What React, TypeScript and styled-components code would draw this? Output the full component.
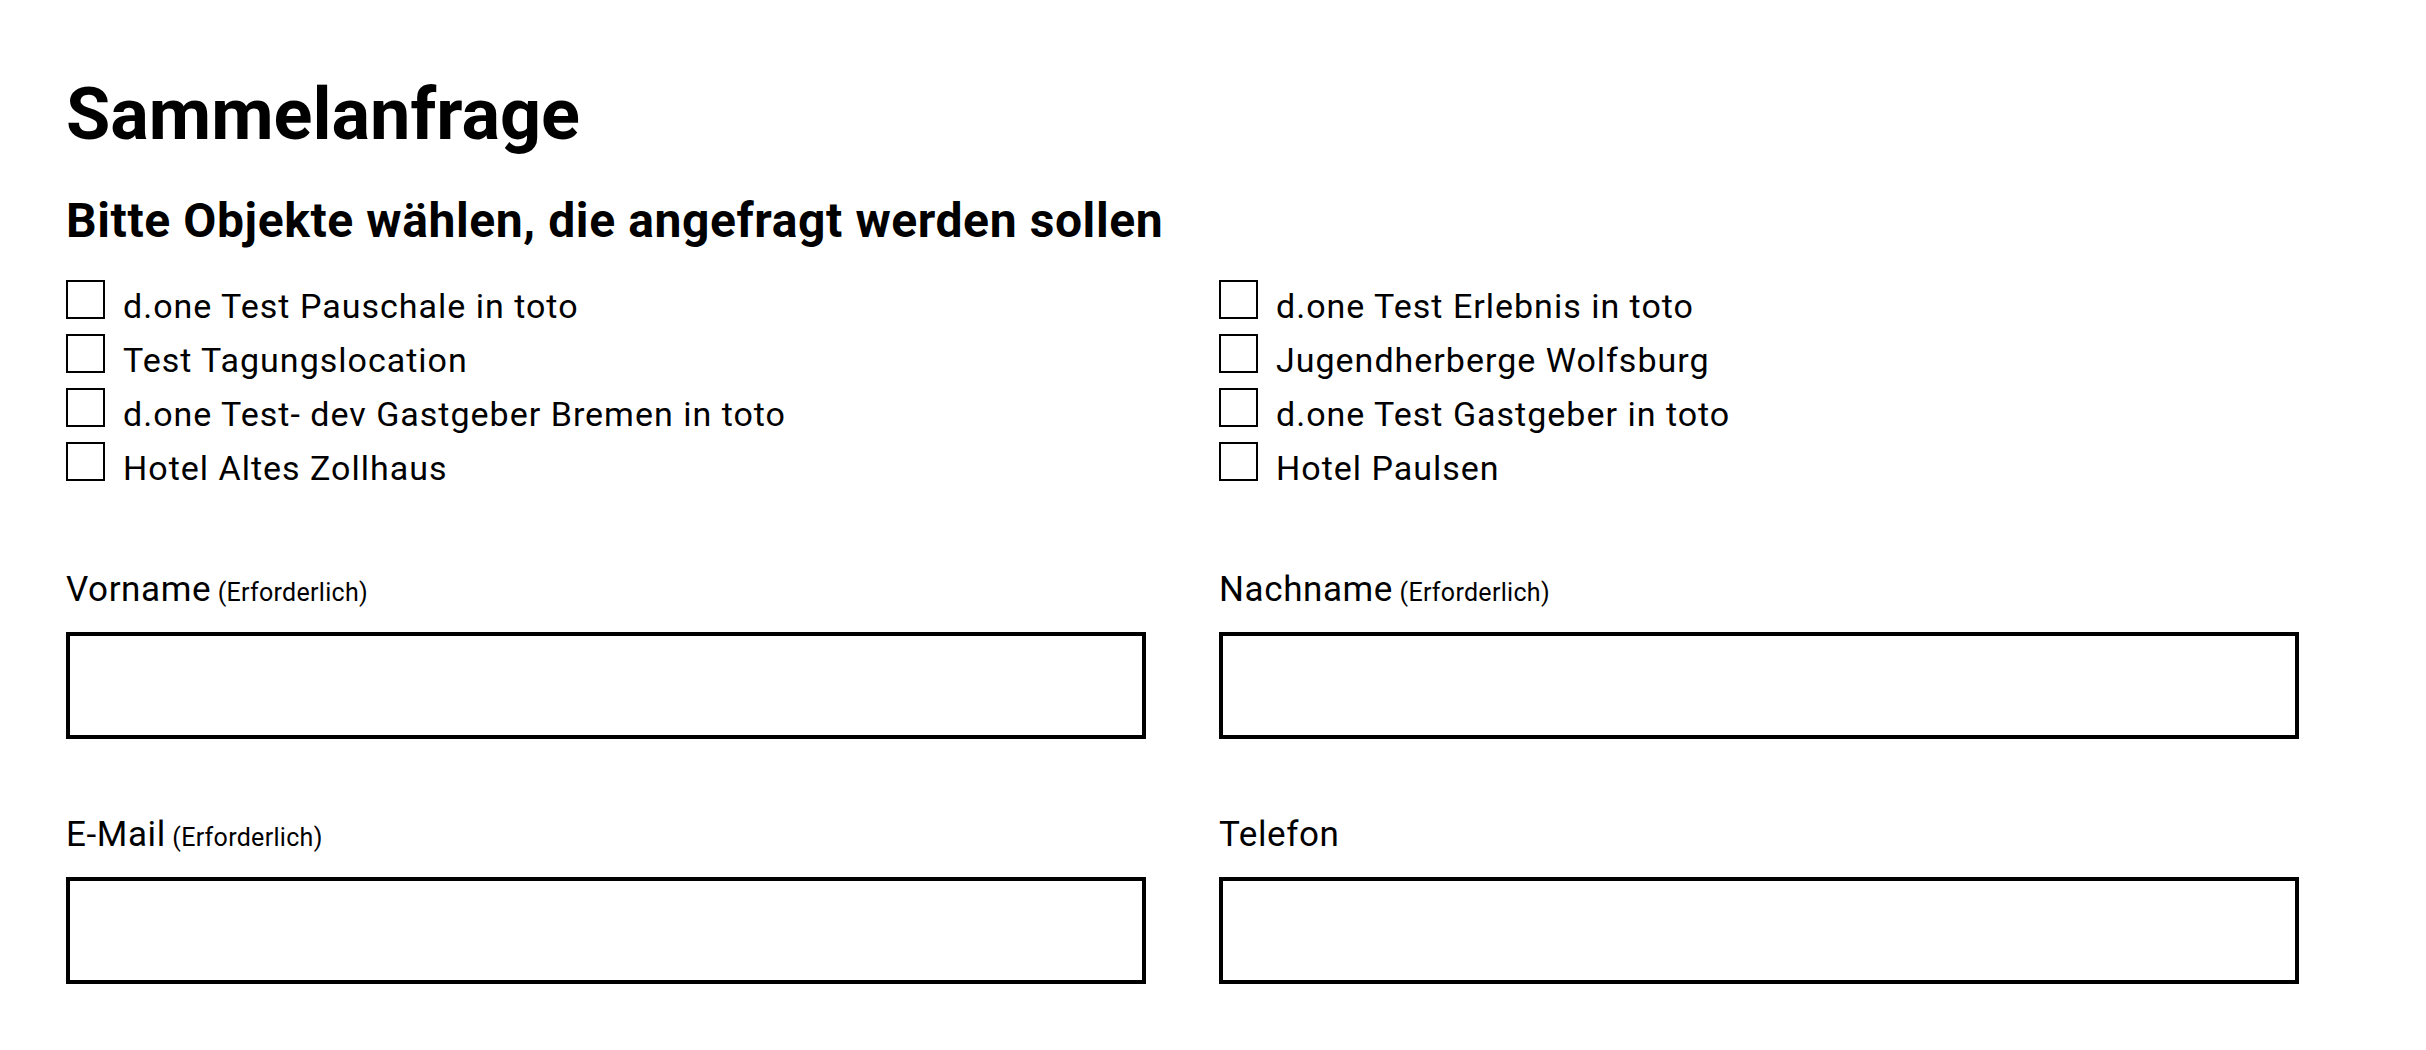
import styled, { createGlobalStyle } from "styled-components";

const GlobalStyle = createGlobalStyle`
  html, body {
    margin: 0;
    padding: 0;
    background: #fff;
  }
  body {
    font-family: Roboto, "Noto Sans", "Liberation Sans", sans-serif;
    color: #000;
  }
  * {
    box-sizing: border-box;
  }
`;

const objects = [
  "d.one Test Pauschale in toto",
  "d.one Test Erlebnis in toto",
  "Test Tagungslocation",
  "Jugendherberge Wolfsburg",
  "d.one Test- dev Gastgeber Bremen in toto",
  "d.one Test Gastgeber in toto",
  "Hotel Altes Zollhaus",
  "Hotel Paulsen",
];

const fields = [
  { label: "Vorname", required: true },
  { label: "Nachname", required: true },
  { label: "E-Mail", required: true },
  { label: "Telefon", required: false },
];

export default function App() {
  return (
    <Page>
      <GlobalStyle />
      <Title>Sammelanfrage</Title>
      <SubTitle>Bitte Objekte wählen, die angefragt werden sollen</SubTitle>
      <ObjectGrid>
        {objects.map((name) => (
          <ObjectRow key={name}>
            <Checkbox type="checkbox" />
            <ObjectName>{name}</ObjectName>
          </ObjectRow>
        ))}
      </ObjectGrid>
      <FieldGrid>
        {fields.map((f) => (
          <Field key={f.label}>
            <FieldLabel>
              {f.label}
              {f.required && <Required> (Erforderlich)</Required>}
            </FieldLabel>
            <TextInput type="text" />
          </Field>
        ))}
      </FieldGrid>
    </Page>
  );
}

const Page = styled.div`
  width: 2299px;
  padding: 79px 0 60px 66px;
`;

const Title = styled.h1`
  margin: 0;
  font-size: 72px;
  line-height: 72px;
  font-weight: 700;
`;

const SubTitle = styled.h2`
  margin: 46px 0 0;
  font-size: 48px;
  line-height: 48px;
  font-weight: 700;
  letter-spacing: 0.6px;
`;

const ObjectGrid = styled.div`
  display: grid;
  grid-template-columns: 1080px 1080px;
  column-gap: 73px;
  row-gap: 11px;
  margin-top: 35px;
`;

const ObjectRow = styled.label`
  display: flex;
  align-items: flex-start;
  gap: 18px;
`;

const Checkbox = styled.input`
  appearance: none;
  margin: 0;
  width: 39px;
  height: 39px;
  border: 2px solid #000;
  border-radius: 0;
  background: #fff;
  flex-shrink: 0;
`;

const ObjectName = styled.span`
  padding-top: 9px;
  font-size: 34px;
  line-height: 34px;
  letter-spacing: 1px;
`;

const FieldGrid = styled.div`
  display: grid;
  grid-template-columns: 1080px 1080px;
  column-gap: 73px;
  row-gap: 78px;
  margin-top: 87px;
`;

const Field = styled.div`
  display: flex;
  flex-direction: column;
  gap: 25px;
`;

const FieldLabel = styled.span`
  display: block;
  height: 35px;
  font-size: 35px;
  line-height: 35px;
  letter-spacing: 0.6px;
  white-space: nowrap;
`;

const Required = styled.span`
  font-size: 25px;
  line-height: 1;
  letter-spacing: 0.3px;
`;

const TextInput = styled.input`
  margin: 0;
  width: 100%;
  height: 107px;
  border: 4px solid #000;
  border-radius: 0;
  background: #fff;
  font-size: 32px;
  padding: 0 16px;
  outline: none;
`;
